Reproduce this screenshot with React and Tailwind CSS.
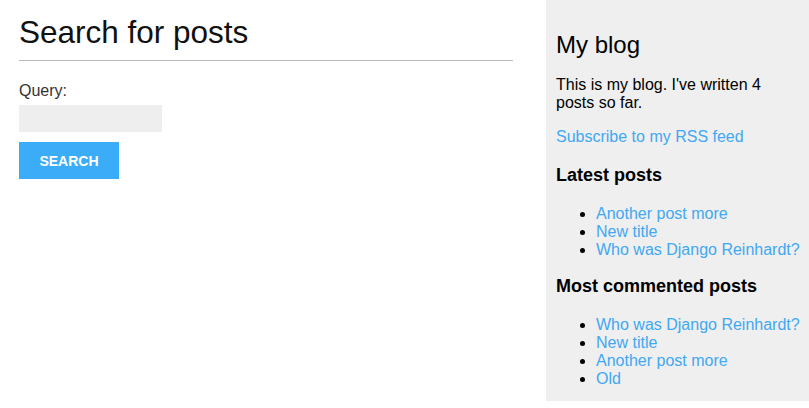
import { useState } from "react";

const latest = ["Another post more", "New title", "Who was Django Reinhardt?"];
const mostCommented = ["Who was Django Reinhardt?", "New title", "Another post more", "Old"];

function PostList({ posts, className }) {
  return (
    <ul className={`list-disc pl-[40px] ${className}`}>
      {posts.map((title, i) => (
        <li key={i} className="whitespace-nowrap text-[16px] leading-[18px]">
          <a href="#" className="text-[#41a8f3]">
            {title}
          </a>
        </li>
      ))}
    </ul>
  );
}

export default function App() {
  const [query, setQuery] = useState("");

  return (
    <div className="flex items-start bg-white font-['Liberation_Sans',Arial,sans-serif] text-black">
      {/* Search form */}
      <div className="w-[513px] shrink-0 pl-[19px] pt-[14px]">
        <h1 className="border-b border-[#bbbbbb] pb-[10px] text-[31.5px] font-normal leading-[36px] text-[#111]">
          Search for posts
        </h1>
        <form className="flex flex-col items-start pt-[21px]" onSubmit={(e) => e.preventDefault()}>
          <label className="text-[16px] leading-[18px] text-[#333]">Query:</label>
          <input
            type="text"
            value={query}
            onChange={(e) => setQuery(e.target.value)}
            className="mt-[5px] h-[27px] w-[143px] bg-[#eeeeee] px-2 text-[14px] outline-none"
          />
          <button
            type="submit"
            className="mt-[10px] flex h-[37px] w-[100px] items-center justify-center bg-[#3badf8] pt-[1px] text-[14px] font-bold uppercase text-white"
          >
            Search
          </button>
        </form>
      </div>

      {/* Sidebar */}
      <div className="ml-[33px] w-[263px] shrink-0 bg-[#efefef] px-[10px] pt-[31px] pb-[13px]">
        <h2 className="text-[24px] font-normal leading-[28px]">My blog</h2>
        <p className="mt-[17px] text-[16px] leading-[18px]">This is my blog. I've written 4 posts so far.</p>
        <p className="mt-[16px] text-[16px] leading-[18px]">
          <a href="#" className="text-[#41a8f3]">
            Subscribe to my RSS feed
          </a>
        </p>
        <h3 className="mt-[19px] text-[18px] font-bold leading-[21px]">Latest posts</h3>
        <PostList posts={latest} className="mt-[19px]" />
        <h3 className="mt-[17px] text-[18px] font-bold leading-[21px]">Most commented posts</h3>
        <PostList posts={mostCommented} className="mt-[19px]" />
      </div>
    </div>
  );
}
